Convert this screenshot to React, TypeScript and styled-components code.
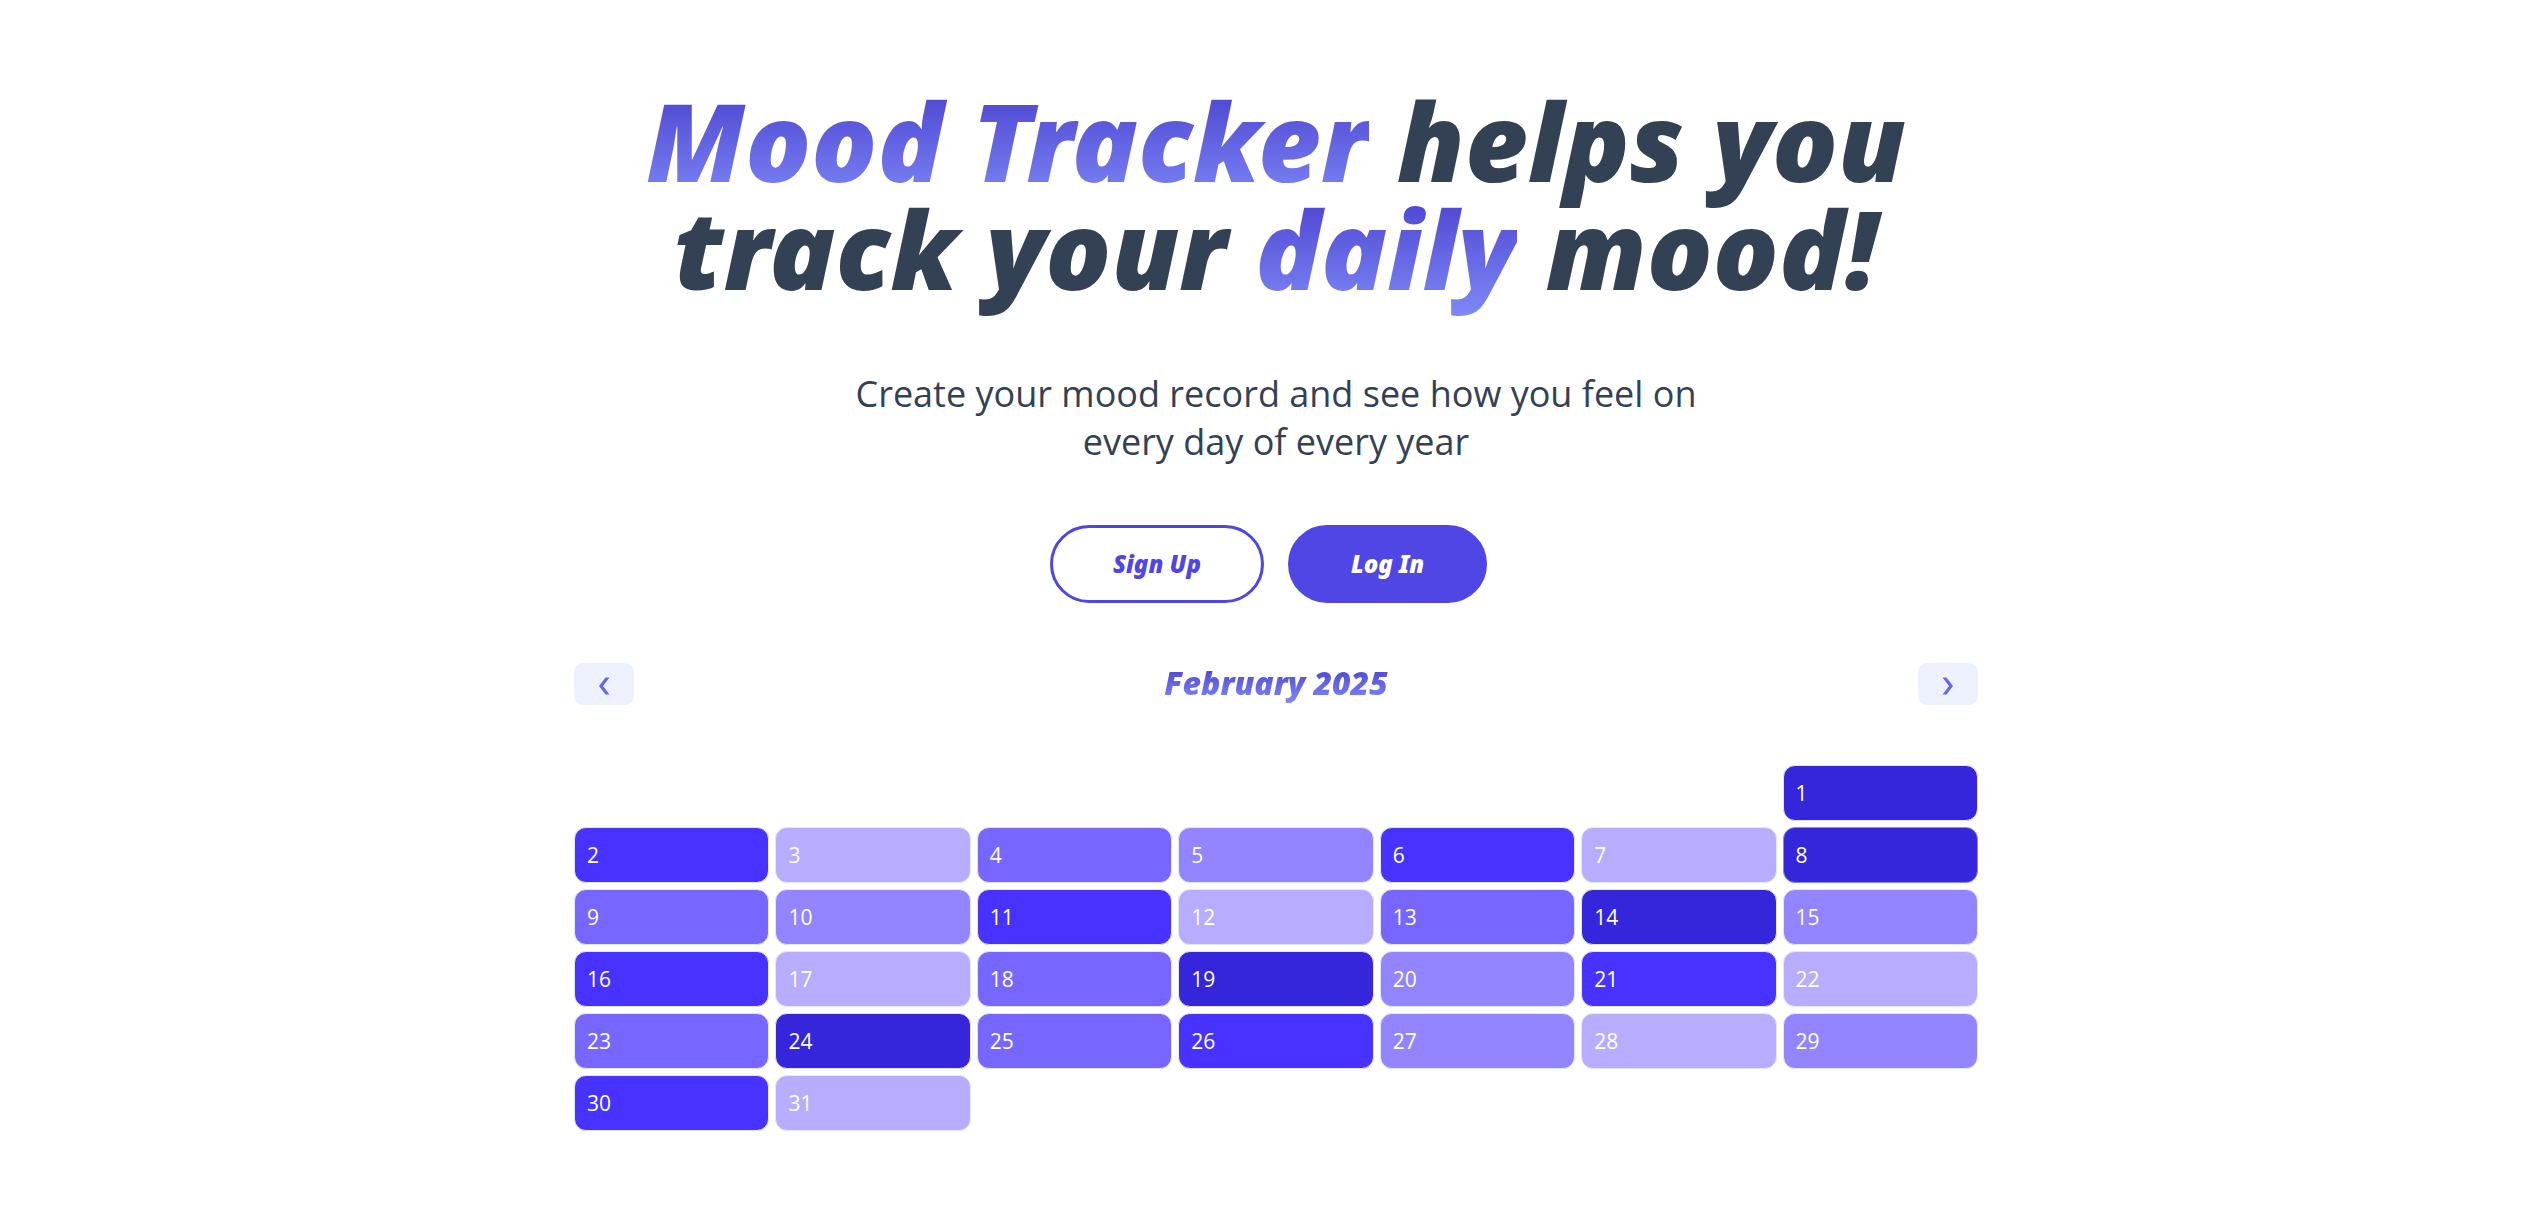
import React from "react";
import styled, { createGlobalStyle } from "styled-components";

const GlobalStyle = createGlobalStyle`
  *, *::before, *::after { box-sizing: border-box; }
  body {
    margin: 0;
    background: #ffffff;
    color: #334155;
    font-family: "Open Sans", sans-serif;
  }
  h1, h2, p, ol { margin: 0; padding: 0; }
  button { cursor: pointer; font: inherit; }
`;

const display = `
  font-family: "Noto Sans", sans-serif;
  font-style: italic;
  font-weight: 900;
`;

const Page = styled.main`
  display: flex;
  flex-direction: column;
  align-items: center;
  padding: 86px 0 96px 5px;
`;

const Title = styled.h1`
  ${display}
  max-width: 1404px;
  font-size: 109px;
  line-height: 108px;
  text-align: center;
`;

const Gradient = styled.span`
  background: linear-gradient(to bottom, #4338ca, #818cf8);
  background-clip: text;
  -webkit-background-clip: text;
  color: transparent;
`;

const Lead = styled.p`
  max-width: 900px;
  margin-top: 68px;
  font-size: 36px;
  line-height: 48px;
  text-align: center;
`;

const Actions = styled.div`
  display: grid;
  grid-template-columns: repeat(2, 1fr);
  justify-items: start;
  gap: 24px;
  margin-top: 59px;
`;

const ActionButton = styled.button<{ $solid?: boolean }>`
  ${display}
  border: 3px solid #4f46e5;
  border-radius: 39px;
  padding: 18px 60px;
  font-size: 24px;
  line-height: 36px;
  color: ${(p) => (p.$solid ? "#ffffff" : "#4f46e5")};
  background: ${(p) => (p.$solid ? "#4f46e5" : "#ffffff")};
`;

const Calendar = styled.section`
  display: flex;
  flex-direction: column;
  gap: 60px;
  width: 100%;
  max-width: 1404px;
  margin-top: 60px;
`;

const MonthBar = styled.header`
  display: flex;
  align-items: flex-start;
  justify-content: space-between;
`;

const Month = styled.h2`
  ${display}
  font-size: 32px;
  line-height: 40px;
`;

const NavButton = styled.button`
  display: flex;
  align-items: center;
  justify-content: center;
  width: 60px;
  height: 42px;
  padding: 3px 0 0;
  border: 0;
  border-radius: 9px;
  color: #6366f1;
  background: #eef2ff;
`;

const Grid = styled.ol`
  display: grid;
  grid-template-columns: repeat(7, 1fr);
  gap: 6px;
  list-style: none;
`;

const Day = styled.li<{ $tone: string; $today?: boolean }>`
  padding: 12px;
  border: 1px solid ${(p) => (p.$today ? "#818cf8" : "#e0e7ff")};
  border-radius: 12px;
  font-size: 21px;
  line-height: 30px;
  color: #ffffff;
  background: ${(p) => p.$tone};

  &:first-child { grid-column-start: 7; }
`;

const tones = ["#b8acff", "#9385ff", "#7766ff", "#4832ff", "#3525db"];

const moods = [
  4,
  3, 0, 2, 1, 3, 0, 4,
  2, 1, 3, 0, 2, 4, 1,
  3, 0, 2, 4, 1, 3, 0,
  2, 4, 2, 3, 1, 0, 1,
  3, 0,
];

const Chevron = ({ flip = false }: { flip?: boolean }) => (
  <svg width="12" height="18" viewBox="0 0 12 18" aria-hidden="true">
    <path
      d={flip ? "M0.5 0.5H4.5L11 9L4.5 17.5H0.5L7 9Z" : "M11.5 0.5H7.5L1 9L7.5 17.5H11.5L5 9Z"}
      fill="currentColor"
    />
  </svg>
);

export default function App() {
  return (
    <>
      <GlobalStyle />
      <Page>
        <Title>
          <Gradient>Mood Tracker</Gradient> helps you
          <br />
          track your <Gradient>daily</Gradient> mood!
        </Title>
        <Lead>Create your mood record and see how you feel on every day of every year</Lead>
        <Actions>
          <ActionButton type="button">Sign Up</ActionButton>
          <ActionButton type="button" $solid>Log In</ActionButton>
        </Actions>
        <Calendar>
          <MonthBar>
            <NavButton type="button" aria-label="Previous month"><Chevron /></NavButton>
            <Month><Gradient>February 2025</Gradient></Month>
            <NavButton type="button" aria-label="Next month"><Chevron flip /></NavButton>
          </MonthBar>
          <Grid>
            {moods.map((mood, i) => (
              <Day key={i} $tone={tones[mood]} $today={i === 7}>{i + 1}</Day>
            ))}
          </Grid>
        </Calendar>
      </Page>
    </>
  );
}
